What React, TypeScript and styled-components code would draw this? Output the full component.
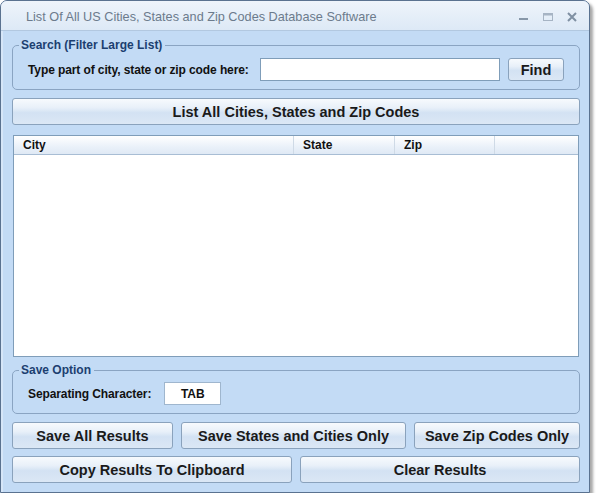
import React from "react";
import styled, { createGlobalStyle } from "styled-components";

const GlobalStyle = createGlobalStyle`
  html, body {
    margin: 0;
    padding: 0;
    background: #ffffff;
  }
  body {
    font-family: "Liberation Sans", Arial, sans-serif;
  }
`;

function App() {
  return (
    <>
      <GlobalStyle />
      <Window>
        <TitleBar>
          <TitleText>List Of All US Cities, States and Zip Codes Database Software</TitleText>
          <Controls>
            <svg width="14" height="10" viewBox="0 0 14 10">
              <rect x="2" y="6" width="9" height="2" fill="#8797a9" />
            </svg>
            <svg width="14" height="10" viewBox="0 0 14 10">
              <rect x="2.5" y="1.5" width="9" height="7" fill="none" stroke="#a6b4c4" />
              <rect x="2.5" y="1.5" width="9" height="2" fill="#a6b4c4" />
            </svg>
            <svg width="14" height="10" viewBox="0 0 14 10">
              <path d="M3 1 L11 9 M11 1 L3 9" stroke="#7f90a3" strokeWidth="2" />
            </svg>
          </Controls>
        </TitleBar>
        <Content>
          <Group $mb={8} $pb={8}>
            <Legend>Search (Filter Large List)</Legend>
            <SearchRow>
              <FieldLabel>Type part of city, state or zip code here:</FieldLabel>
              <SearchInput defaultValue="" />
              <Button $w={56} $h={23}>Find</Button>
            </SearchRow>
          </Group>
          <Button $h={27} $mb={10}>List All Cities, States and Zip Codes</Button>
          <ListView>
            <ListHeader>
              <HeaderCell $w={280}>City</HeaderCell>
              <HeaderCell $w={101}>State</HeaderCell>
              <HeaderCell $w={100}>Zip</HeaderCell>
              <HeaderCell $w={83} $last />
            </ListHeader>
          </ListView>
          <Group $mb={8} $pt={5} $pb={8}>
            <Legend>Save Option</Legend>
            <SaveRow>
              <FieldLabel>Separating Character:</FieldLabel>
              <SepBox>TAB</SepBox>
            </SaveRow>
          </Group>
          <ButtonRow $gap={8} $mb={7}>
            <Button $h={27} $w={161}>Save All Results</Button>
            <Button $h={27} $w={225}>Save States and Cities Only</Button>
            <Button $h={27} $grow>Save Zip Codes Only</Button>
          </ButtonRow>
          <ButtonRow $gap={8}>
            <Button $h={27} $grow>Copy Results To Clipboard</Button>
            <Button $h={27} $grow>Clear Results</Button>
          </ButtonRow>
        </Content>
      </Window>
    </>
  );
}

export default App;

const Window = styled.div`
  width: 588px;
  height: 491px;
  border: 1px solid #5a7290;
  border-radius: 7px 7px 0 0;
  background: #c3dbf5;
  box-shadow: 3px 3px 3px rgba(0, 0, 0, 0.35);
  display: flex;
  flex-direction: column;
  overflow: hidden;
`;

const TitleBar = styled.div`
  height: 29px;
  flex-shrink: 0;
  display: flex;
  align-items: center;
  justify-content: space-between;
  padding: 0 10px 0 25px;
  background: linear-gradient(#eef4fb, #dde9f6);
  border-bottom: 1px solid #b2c8e0;
`;

const TitleText = styled.span`
  font-family: "Liberation Sans", Arial, sans-serif;
  font-size: 12.7px;
  color: #6c7b8c;
  padding-top: 3px;
`;

const Controls = styled.div`
  display: flex;
  gap: 10px;
  align-items: center;
  padding-top: 3px;
`;

const Content = styled.div`
  flex: 1;
  display: flex;
  flex-direction: column;
  padding: 7px 9px 0 9px;
  border-left: 2px solid #d6e6f8;
`;

const Group = styled.fieldset<{ $mb?: number; $pt?: number; $pb?: number }>`
  margin: 0 0 ${(p) => p.$mb ?? 0}px 0;
  padding: ${(p) => p.$pt ?? 6}px 15px ${(p) => p.$pb ?? 9}px 15px;
  border: 1px solid #8aa4c2;
  border-radius: 5px;
  min-width: 0;
`;

const Legend = styled.legend`
  font-size: 12px;
  font-weight: bold;
  line-height: 14px;
  color: #1c3f70;
  padding: 0 3px 0 2px;
  margin-left: -9px;
`;

const SearchRow = styled.div`
  display: flex;
  align-items: center;
`;

const SaveRow = styled.div`
  display: flex;
  align-items: center;
  gap: 13px;
`;

const FieldLabel = styled.span`
  font-size: 12px;
  font-weight: bold;
  color: #111;
  letter-spacing: -0.1px;
`;

const SearchInput = styled.input`
  box-sizing: border-box;
  width: 240px;
  height: 23px;
  margin: 0 8px 0 auto;
  border: 1px solid #7f9db9;
  background: #fff;
  padding: 0 4px;
  font-family: "Liberation Sans", Arial, sans-serif;
  font-size: 12px;
  outline: none;
`;

const Button = styled.button<{ $w?: number; $h: number; $mb?: number; $grow?: boolean }>`
  box-sizing: border-box;
  ${(p) => (p.$w ? `width: ${p.$w}px;` : "")}
  ${(p) => (p.$grow ? "flex: 1;" : "")}
  flex-shrink: 0;
  height: ${(p) => p.$h}px;
  margin: 0 0 ${(p) => p.$mb ?? 0}px 0;
  padding: 0;
  border: 1px solid #8aa2bc;
  border-radius: 3px;
  background: linear-gradient(#f7fafd 0%, #e8f0f9 35%, #d3e2f3 55%, #dbe7f5 100%);
  font-family: "Liberation Sans", Arial, sans-serif;
  font-size: 14.5px;
  font-weight: bold;
  color: #1a1a1a;
  cursor: default;
`;

const ListView = styled.div`
  height: 220px;
  margin: 0 1px 6px 1px;
  background: #fff;
  border: 1px solid #7f9db9;
  display: flex;
  flex-direction: column;
`;

const ListHeader = styled.div`
  display: flex;
  height: 18px;
  background: linear-gradient(#ffffff, #eaf1f9 60%, #dfe9f5);
  border-bottom: 1px solid #a8bdd4;
`;

const HeaderCell = styled.div<{ $w: number; $last?: boolean }>`
  box-sizing: border-box;
  width: ${(p) => p.$w}px;
  padding-left: 9px;
  font-size: 12px;
  font-weight: bold;
  line-height: 18px;
  color: #111;
  border-right: ${(p) => (p.$last ? "none" : "1px solid #cfdae6")};
`;

const SepBox = styled.div`
  box-sizing: border-box;
  width: 57px;
  height: 23px;
  background: #fff;
  border: 1px solid #9fb6ce;
  display: flex;
  align-items: center;
  justify-content: center;
  font-size: 12px;
  font-weight: bold;
  color: #111;
`;

const ButtonRow = styled.div<{ $gap: number; $mb?: number }>`
  display: flex;
  gap: ${(p) => p.$gap}px;
  margin-bottom: ${(p) => p.$mb ?? 0}px;
`;
